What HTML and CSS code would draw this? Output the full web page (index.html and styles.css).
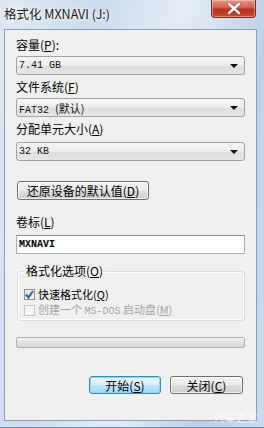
FILE: index.html
```html
<!DOCTYPE html>
<html lang="zh-CN">
<head>
  <meta charset="UTF-8">
  <meta name="viewport" content="width=device-width, initial-scale=1.0">
  <title>格式化 MXNAVI (J:)</title>
  <link rel="stylesheet" href="styles.css">
</head>
<body>
  <div class="window">
    <div class="titlebar">
      <div class="title">格式化 MXNAVI (J:)</div>
      <div class="close-btn">
        <svg width="14" height="11" viewBox="0 0 14 11">
          <path d="M2 1 L12 10 M12 1 L2 10" stroke="#5a1a1a" stroke-width="3.4" stroke-linecap="round" opacity="0.45"/>
          <path d="M2 1 L12 10 M12 1 L2 10" stroke="#fff" stroke-width="2.4" stroke-linecap="round"/>
        </svg>
      </div>
    </div>

    <div class="frame-body">
      <div class="client">
        <div class="label first">容量(<u>P</u>):</div>
        <div class="combo"><span class="value">7.41 GB</span><span class="arrow"></span></div>

        <div class="label">文件系统(<u>F</u>)</div>
        <div class="combo"><span class="value">FAT32 <span class="cjk">(默认)</span></span><span class="arrow"></span></div>

        <div class="label">分配单元大小(<u>A</u>)</div>
        <div class="combo combo-last"><span class="value">32 KB</span><span class="arrow"></span></div>

        <button class="btn restore-btn" type="button">还原设备的默认值(<u>D</u>)</button>

        <div class="label volume-label">卷标(<u>L</u>)</div>
        <div class="textbox">MXNAVI</div>

        <fieldset class="options">
          <legend>格式化选项(<u>O</u>)</legend>
          <div class="check-row">
            <span class="checkbox checked">
              <svg width="9" height="9" viewBox="0 0 9 9">
                <path d="M1 4.5 L3.5 7.5 L8 1" fill="none" stroke="#3d5a98" stroke-width="2"/>
              </svg>
            </span>
            <span>快速格式化(<u>Q</u>)</span>
          </div>
          <div class="check-row disabled">
            <span class="checkbox"></span>
            <span>创建一个 <span class="mono">MS-DOS</span> 启动盘(<u>M</u>)</span>
          </div>
        </fieldset>

        <div class="progress"></div>

        <div class="actions">
          <button class="btn default-btn" type="button">开始(<u>S</u>)</button>
          <button class="btn" type="button">关闭(<u>C</u>)</button>
        </div>
      </div>
    </div>

    <div class="watermark">汽车之家</div>
  </div>
</body>
</html>
```

FILE: styles.css
```css
body {
  margin: 0;
  padding: 0;
  font-family: "Noto Sans CJK SC", "Liberation Sans", sans-serif;
  font-size: 12px;
  color: #000;
}

.window {
  position: relative;
  width: 264px;
  height: 428px;
  box-sizing: border-box;
  display: flex;
  flex-direction: column;
  background: linear-gradient(100deg, #dfe9f4 0%, #cbdcee 30%, #e4edf6 55%, #bcd1e8 80%, #c9dbee 100%);
  overflow: hidden;
}

.titlebar {
  height: 29px;
  display: flex;
  justify-content: space-between;
  align-items: flex-start;
  flex-shrink: 0;
}

.title {
  padding-left: 4px;
  line-height: 28px;
  font-size: 12.5px;
  color: #1a1a1a;
  text-shadow: 0 0 6px #fff, 0 0 3px #fff;
}

.close-btn {
  width: 45px;
  height: 18px;
  margin-right: 8px;
  box-sizing: border-box;
  border: 1px solid #7a2a23;
  border-top: none;
  border-radius: 0 0 4px 4px;
  background: linear-gradient(to bottom, #e39a8a 0%, #d0604c 45%, #b8311f 55%, #c84b33 100%);
  box-shadow: inset 0 0 0 1px rgba(255, 220, 200, 0.45);
  display: flex;
  justify-content: center;
  align-items: center;
}

.frame-body {
  flex: 1;
  padding: 0 7px 6px 4px;
  display: flex;
  border-bottom: 1px solid #6d8fb5;
}

.client {
  flex: 1;
  border: 1px solid #8a9fb8;
  background: #f0f0f0;
  padding: 7px 11px 0 11px;
  display: flex;
  flex-direction: column;
  align-items: flex-start;
}

.label {
  line-height: 16px;
  margin-top: 4px;
}

.label.first {
  margin-top: 0;
}

.combo {
  margin-top: 3px;
  width: 229px;
  height: 19px;
  box-sizing: border-box;
  border: 1px solid #a3a3a3;
  border-radius: 3px;
  background: linear-gradient(to bottom, #f6f6f6 0%, #ececec 50%, #dedede 51%, #e6e6e6 100%);
  display: flex;
  align-items: center;
  justify-content: space-between;
  padding: 0 6px 0 2px;
}

.combo-last {
  margin-top: 5px;
}

.value {
  font-family: "Liberation Mono", "Noto Sans CJK SC", monospace;
  font-size: 10px;
  color: #111;
}

.cjk {
  font-family: "Noto Sans CJK SC", sans-serif;
  font-size: 11px;
}

.arrow {
  width: 0;
  height: 0;
  border-left: 4px solid transparent;
  border-right: 4px solid transparent;
  border-top: 4px solid #111;
}

.btn {
  font-family: "Noto Sans CJK SC", "Liberation Sans", sans-serif;
  font-size: 12px;
  color: #000;
  height: 18px;
  padding: 0;
  box-sizing: border-box;
  border: 1px solid #707070;
  border-radius: 3px;
  background: linear-gradient(to bottom, #f2f2f2 0%, #ebebeb 50%, #dddddd 51%, #cfcfcf 100%);
  box-shadow: inset 0 0 0 1px rgba(255, 255, 255, 0.7);
  line-height: 15px;
  width: 73px;
}

.restore-btn {
  margin-top: 20px;
  margin-left: 1px;
  width: 132px;
  height: 19px;
}

.volume-label {
  margin-top: 14px;
}

.textbox {
  margin-top: 5px;
  width: 229px;
  height: 19px;
  box-sizing: border-box;
  border: 1px solid #abadb3;
  border-top-color: #8e9199;
  background: #fff;
  padding-left: 2px;
  font-family: "Liberation Mono", monospace;
  font-size: 10px;
  font-weight: bold;
  line-height: 17px;
}

.options {
  margin: 9px 0 0 1px;
  padding: 0 6px 2px 6px;
  width: 228px;
  box-sizing: border-box;
  border: 1px solid #d5dfe5;
  border-radius: 3px;
  box-shadow: inset 0 0 0 1px #fff;
}

.options legend {
  padding: 0 2px;
  line-height: 16px;
  font-size: 12px;
}

.check-row {
  display: flex;
  align-items: center;
  gap: 3px;
  height: 16px;
  line-height: 16px;
  font-size: 11px;
}

.check-row:first-of-type {
  margin-top: 7px;
}

.checkbox {
  width: 11px;
  height: 11px;
  box-sizing: border-box;
  border: 1px solid #8f8f8f;
  background: linear-gradient(135deg, #dcdcdc 0%, #f8f8f8 100%);
  box-shadow: inset 0 0 0 1px #f4f4f4;
  display: flex;
  align-items: center;
  justify-content: center;
}

.check-row.disabled {
  color: #a5a5a5;
}

.check-row.disabled .checkbox {
  border-color: #c8c8c8;
  background: #f6f6f6;
}

.mono {
  font-family: "Liberation Mono", monospace;
  font-size: 10px;
}

.progress {
  margin-top: 16px;
  width: 229px;
  height: 11px;
  box-sizing: border-box;
  border: 1px solid #b2b2b2;
  border-radius: 2px;
  background: linear-gradient(to bottom, #f3f3f3 0%, #e2e2e2 50%, #d8d8d8 100%);
}

.actions {
  margin-top: 28px;
  width: 227px;
  display: flex;
  justify-content: flex-end;
  gap: 9px;
}

.default-btn {
  width: 72px;
  border-color: #3c8cb8;
  background: linear-gradient(to bottom, #eaf6fd 0%, #d9f0fc 50%, #bee6fd 51%, #a7d9f5 100%);
  box-shadow: inset 0 0 0 1px #8ed4f4;
}

.watermark {
  position: absolute;
  right: 6px;
  bottom: 3px;
  font-size: 10px;
  letter-spacing: 1px;
  color: rgba(255, 255, 255, 0.75);
}
```
